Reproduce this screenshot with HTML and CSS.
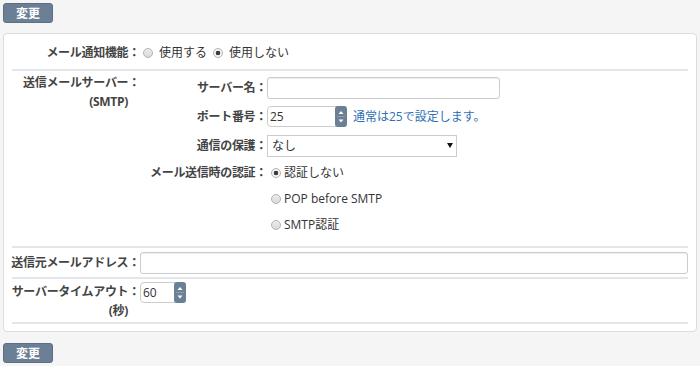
FILE: index.html
```html
<!DOCTYPE html>
<html lang="ja">
<head>
    <meta charset="UTF-8">
    <title>メール通知設定</title>
    <link rel="stylesheet" href="styles.css">
</head>
<body>
    <button class="btn" type="button">変更</button>
    <div class="panel">
        <div class="row row-notify">
            <div class="row-label"><span>メール通知機能：</span></div>
            <div class="field">
                <label class="radio"><input type="radio" name="notify">使用する</label>
                <label class="radio"><input type="radio" name="notify" checked>使用しない</label>
            </div>
        </div>
        <div class="row row-smtp">
            <div class="row-label tall">
                <span>送信メールサーバー：</span>
                <span class="sub">(SMTP)</span>
            </div>
            <div class="sub-rows">
                <div class="sub-row">
                    <div class="sub-label"><span>サーバー名：</span></div>
                    <input class="text-input server-name" type="text">
                </div>
                <div class="sub-row">
                    <div class="sub-label"><span>ポート番号：</span></div>
                    <span class="spinner port">
                        <input type="text" value="25">
                        <span class="spin-btn">
                            <svg width="12" height="21" viewBox="0 0 12 21"><path d="M3.5 8 L6 5 L8.5 8 Z" fill="#fff"/><path d="M2 10.5 H10" stroke="#8c9cae" stroke-width="1"/><path d="M3.5 13.5 L6 16.5 L8.5 13.5 Z" fill="#fff"/></svg>
                        </span>
                    </span>
                    <span class="hint">通常は25で設定します。</span>
                </div>
                <div class="sub-row">
                    <div class="sub-label"><span>通信の保護：</span></div>
                    <span class="select-wrap">
                        <select class="select">
                            <option>なし</option>
                            <option>SSL</option>
                            <option>STARTTLS</option>
                        </select>
                        <span class="select-arrow"></span>
                    </span>
                </div>
                <div class="sub-row radio-row">
                    <div class="sub-label"><span>メール送信時の認証：</span></div>
                    <label class="radio tight"><input type="radio" name="auth" checked>認証しない</label>
                </div>
                <div class="sub-row radio-row">
                    <div class="sub-label"></div>
                    <label class="radio tight"><input type="radio" name="auth">POP before SMTP</label>
                </div>
                <div class="sub-row radio-row">
                    <div class="sub-label"></div>
                    <label class="radio tight"><input type="radio" name="auth">SMTP認証</label>
                </div>
            </div>
        </div>
        <div class="row row-from">
            <div class="row-label"><span>送信元メールアドレス：</span></div>
            <input class="text-input mail-from" type="text">
        </div>
        <div class="row row-timeout">
            <div class="row-label tall">
                <span>サーバータイムアウト：</span>
                <span class="sub">(秒)</span>
            </div>
            <span class="spinner timeout">
                <input type="text" value="60">
                <span class="spin-btn">
                    <svg width="12" height="21" viewBox="0 0 12 21"><path d="M3.5 8 L6 5 L8.5 8 Z" fill="#fff"/><path d="M2 10.5 H10" stroke="#8c9cae" stroke-width="1"/><path d="M3.5 13.5 L6 16.5 L8.5 13.5 Z" fill="#fff"/></svg>
                </span>
            </span>
        </div>
    </div>
    <button class="btn" type="button">変更</button>
</body>
</html>
```

FILE: styles.css
```css
body {
    margin: 0;
    padding: 3px;
    background-color: #f5f5f5;
    font-family: "Open Sans", "Noto Sans CJK JP", sans-serif;
    font-size: 12px;
    line-height: 16px;
    color: #333;
}
.btn {
    display: block;
    width: 50px;
    height: 20px;
    padding: 0;
    border: 1px solid #5c6f84;
    border-radius: 3px;
    background-color: #6b7f95;
    color: #fff;
    font: bold 12px/18px "Noto Sans CJK JP", sans-serif;
}
.panel {
    margin: 10px 0 11px;
    padding: 0 8px 7px;
    border: 1px solid #ddd;
    border-radius: 4px;
    background-color: #fff;
}
.row {
    display: flex;
    border-bottom: 2px solid #e2e6ea;
}
.row-label,
.sub-label {
    flex: none;
    display: flex;
    flex-direction: column;
    align-items: flex-end;
    white-space: nowrap;
    font-weight: bold;
    color: #444;
    letter-spacing: -0.3px;
}
.row-label {
    width: 128px;
}
.sub-label {
    width: 127px;
}
.row-label.tall {
    line-height: 19px;
}
.row-label .sub {
    margin-right: 12px;
}
.row-notify {
    padding: 11px 0 8px;
}
.row-smtp .row-label {
    padding-top: 2px;
}
.row-from {
    height: 29px;
    align-items: center;
}
.row-timeout {
    padding: 3px 0 2px;
    align-items: flex-start;
}
.field {
    display: flex;
}
.radio {
    display: inline-flex;
    align-items: center;
    margin-right: 3px;
}
.radio input {
    appearance: none;
    -webkit-appearance: none;
    width: 10px;
    height: 10px;
    margin: 0 6px 0 3px;
    border: 1px solid #b3b3b3;
    border-radius: 50%;
    background: linear-gradient(#ececec, #dadada);
    box-sizing: border-box;
}
.radio input:checked {
    background: radial-gradient(circle, #3c3c3c 0 2px, #f4f4f4 2.6px);
}
.radio.tight input {
    margin: 0 3px 0 4px;
}
.sub-rows {
    flex: 1;
    padding: 2px 0 8px;
}
.sub-row {
    display: flex;
    align-items: center;
    height: 29px;
}
.sub-row.radio-row {
    height: 26px;
}
.text-input {
    height: 22px;
    box-sizing: border-box;
    border: 1px solid #ccc;
    border-radius: 3px;
    padding: 0 3px;
    font: inherit;
    color: #333;
    box-shadow: inset 0 1px 1px rgba(0, 0, 0, 0.075);
}
.server-name {
    width: 233px;
}
.mail-from {
    flex: 1;
    min-width: 0;
}
.spinner {
    display: inline-flex;
    height: 21px;
    box-sizing: border-box;
    border: 1px solid #ccc;
    border-radius: 4px;
    background-color: #fff;
}
.spinner.port {
    width: 80px;
}
.spinner.timeout {
    width: 46px;
}
.spinner input {
    flex: 1;
    width: 0;
    min-width: 0;
    border: none;
    padding: 0 2px;
    background: transparent;
    font: inherit;
    color: #333;
    outline: none;
}
.spin-btn {
    display: flex;
    width: 12px;
    margin: -1px -1px -1px 0;
    border-radius: 3px;
    background-color: #6b7f95;
}
.hint {
    margin-left: 6px;
    color: #2f70b5;
}
.select-wrap {
    position: relative;
    display: inline-block;
}
.select {
    appearance: none;
    -webkit-appearance: none;
    display: block;
    width: 190px;
    height: 22px;
    border: 1px solid #ccc;
    border-radius: 0;
    padding: 0 4px;
    background-color: #fff;
    font: inherit;
    color: #333;
}
.select-arrow {
    position: absolute;
    right: 4px;
    top: 8px;
    width: 0;
    height: 0;
    border-left: 3px solid transparent;
    border-right: 3px solid transparent;
    border-top: 5px solid #111;
    pointer-events: none;
}
```
